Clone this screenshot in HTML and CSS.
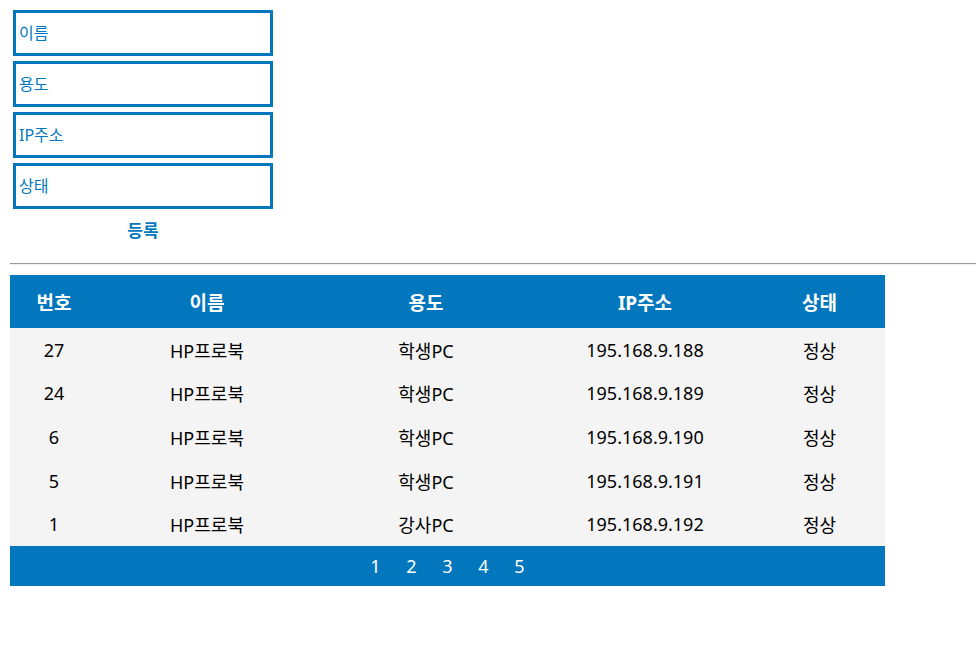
FILE: index.html
```html
<!DOCTYPE html>
<html lang="ko">
<head>
<meta charset="utf-8">
<link rel="stylesheet" href="styles.css">
</head>
<body>
<form class="form">
  <input class="field" type="text" placeholder="이름">
  <input class="field" type="text" placeholder="용도">
  <input class="field" type="text" placeholder="IP주소">
  <input class="field" type="text" placeholder="상태">
  <button class="submit" type="button">등록</button>
</form>
<hr class="divider">
<table class="list">
  <thead>
    <tr><th class="c1">번호</th><th class="c2">이름</th><th class="c3">용도</th><th class="c4">IP주소</th><th class="c5">상태</th></tr>
  </thead>
  <tbody>
    <tr><td>27</td><td>HP프로북</td><td>학생PC</td><td>195.168.9.188</td><td>정상</td></tr>
    <tr><td>24</td><td>HP프로북</td><td>학생PC</td><td>195.168.9.189</td><td>정상</td></tr>
    <tr><td>6</td><td>HP프로북</td><td>학생PC</td><td>195.168.9.190</td><td>정상</td></tr>
    <tr><td>5</td><td>HP프로북</td><td>학생PC</td><td>195.168.9.191</td><td>정상</td></tr>
    <tr><td>1</td><td>HP프로북</td><td>강사PC</td><td>195.168.9.192</td><td>정상</td></tr>
  </tbody>
  <tfoot>
    <tr><td colspan="5"><div class="pager"><span>1</span><span>2</span><span>3</span><span>4</span><span>5</span></div></td></tr>
  </tfoot>
</table>
</body>
</html>
```
FILE: styles.css
```css
html, body {
  margin: 0;
  padding: 0;
}
body {
  padding: 10px 0 0 10px;
  font-family: "Segoe UI", "Noto Sans", "Noto Sans CJK KR", sans-serif;
  color: #000;
  background: #fff;
}
.form {
  display: flex;
  flex-direction: column;
  align-items: flex-start;
  gap: 5.5px;
  margin-left: 3px;
  width: 260px;
}
.field {
  box-sizing: border-box;
  width: 260px;
  height: 45.5px;
  border: 3px solid #0277bd;
  padding: 0 0 0 3px;
  margin: 0;
  font-family: inherit;
  font-size: 16px;
  color: #0277bd;
  background: #fff;
  outline: none;
}
.field::placeholder {
  color: #0277bd;
  opacity: 1;
}
.submit {
  align-self: center;
  margin-top: 5px;
  border: none;
  background: none;
  padding: 0;
  font-family: inherit;
  font-size: 17px;
  font-weight: bold;
  color: #0277bd;
  line-height: 24px;
  cursor: pointer;
}
.divider {
  margin: 20px 0 10px 0;
  border: none;
  border-top: 1px solid #9a9a9a;
  border-bottom: 1px solid #eee;
  height: 0;
}
.list {
  border-collapse: collapse;
  width: 875px;
  font-size: 18px;
}
.list th {
  background: #0277bd;
  color: #fff;
  font-weight: bold;
  font-size: 19px;
  height: 53px;
  padding: 0;
  text-align: center;
}
.c1 { width: 88px; }
.c2 { width: 218px; }
.c3 { width: 220px; }
.c4 { width: 218px; }
.c5 { width: 131px; }
.list tbody td {
  background: #f4f4f4;
  height: 43.6px;
  padding: 0;
  text-align: center;
}
.list tfoot td {
  background: #0277bd;
  height: 40px;
  padding: 0;
}
.pager {
  display: flex;
  justify-content: center;
  gap: 25px;
  color: #fff;
  font-size: 18px;
}
.pager span {
  width: 11px;
  text-align: center;
}
```
